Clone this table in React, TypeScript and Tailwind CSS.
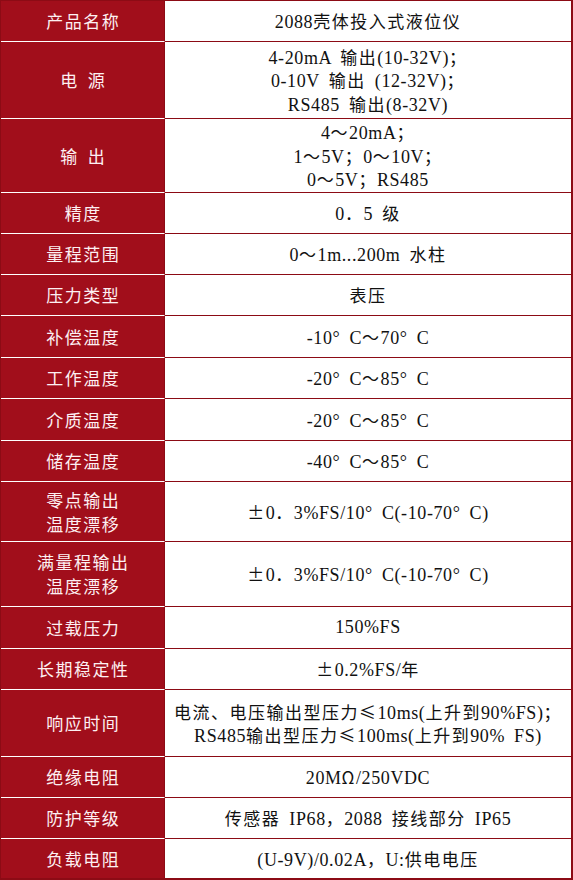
import clsx from 'clsx';

interface Row {
  label: string[];
  value: string[];
  h: string;
}

const rows: Row[] = [
  { label: ['产品名称'], value: ['2088壳体投入式液位仪'], h: 'h-[41px]' },
  {
    label: ['电 源'],
    value: ['4-20mA 输出(10-32V)；', '0-10V 输出 (12-32V)；', 'RS485 输出(8-32V)'],
    h: 'h-[77px]',
  },
  { label: ['输 出'], value: ['4～20mA；', '1～5V；0～10V；', '0～5V；RS485'], h: 'h-[74px]' },
  { label: ['精度'], value: ['0．5 级'], h: 'h-[41px]' },
  { label: ['量程范围'], value: ['0～1m...200m 水柱'], h: 'h-[41px]' },
  { label: ['压力类型'], value: ['表压'], h: 'h-[41px]' },
  { label: ['补偿温度'], value: ['-10° C～70° C'], h: 'h-[42px]' },
  { label: ['工作温度'], value: ['-20° C～85° C'], h: 'h-[41px]' },
  { label: ['介质温度'], value: ['-20° C～85° C'], h: 'h-[42px]' },
  { label: ['储存温度'], value: ['-40° C～85° C'], h: 'h-[41px]' },
  { label: ['零点输出', '温度漂移'], value: ['±0．3%FS/10° C(-10-70° C)'], h: 'h-[60px]' },
  { label: ['满量程输出', '温度漂移'], value: ['±0．3%FS/10° C(-10-70° C)'], h: 'h-[65px]' },
  { label: ['过载压力'], value: ['150%FS'], h: 'h-[42px]' },
  { label: ['长期稳定性'], value: ['±0.2%FS/年'], h: 'h-[41px]' },
  {
    label: ['响应时间'],
    value: ['电流、电压输出型压力≤10ms(上升到90%FS)；', 'RS485输出型压力≤100ms(上升到90% FS)'],
    h: 'h-[67px]',
  },
  { label: ['绝缘电阻'], value: ['20MΩ/250VDC'], h: 'h-[41px]' },
  { label: ['防护等级'], value: ['传感器 IP68，2088 接线部分 IP65'], h: 'h-[41px]' },
  { label: ['负载电阻'], value: ['(U-9V)/0.02A，U:供电电压'], h: 'h-[39px]' },
];

// wide glyphs get the CJK font, the rest a serif latin one
function Mixed({ text }: { text: string }) {
  const parts = text.split(/([\u2000-\u2BFF\u3000-\u9FFF\uFF00-\uFFEF±Ω]+)/);
  return (
    <>
      {parts.map((p, i) =>
        p === '' ? null : i % 2 === 1 ? (
          <span key={i} className="font-['Noto_Sans_CJK_SC',sans-serif] text-[17px] tracking-[1.5px]">
            {p}
          </span>
        ) : (
          <span
            key={i}
            className="font-['Liberation_Serif',serif] text-[18px] tracking-[0.6px] [word-spacing:4px] whitespace-pre"
          >
            {p}
          </span>
        )
      )}
    </>
  );
}

export default function App() {
  return (
    <div className="w-[573px] h-[880px] bg-white">
      <div className="border-t border-l border-r-2 border-b-2 border-[#8c0b15]">
        {rows.map((row, i) => {
          const last = i === rows.length - 1;
          return (
            <div key={i} className={clsx('flex', row.h)}>
              <div
                className={clsx(
                  'w-[164px] shrink-0 flex flex-col items-center justify-center bg-[#a10e1b] text-[#fdf0f2] border-r border-r-[#8c0b15] leading-[24px]',
                  !last && 'border-b border-b-white'
                )}
              >
                {row.label.map((l, j) => (
                  <div key={j} className="h-[24px] pl-[1.5px] whitespace-nowrap">
                    <Mixed text={l} />
                  </div>
                ))}
              </div>
              <div
                className={clsx(
                  'flex-1 flex flex-col items-center justify-center text-[#111] leading-[23.5px]',
                  !last && 'border-b border-b-[#8c0b15]'
                )}
              >
                {row.value.map((v, j) => (
                  <div key={j} className="h-[23.5px] whitespace-nowrap">
                    <Mixed text={v} />
                  </div>
                ))}
              </div>
            </div>
          );
        })}
      </div>
    </div>
  );
}
